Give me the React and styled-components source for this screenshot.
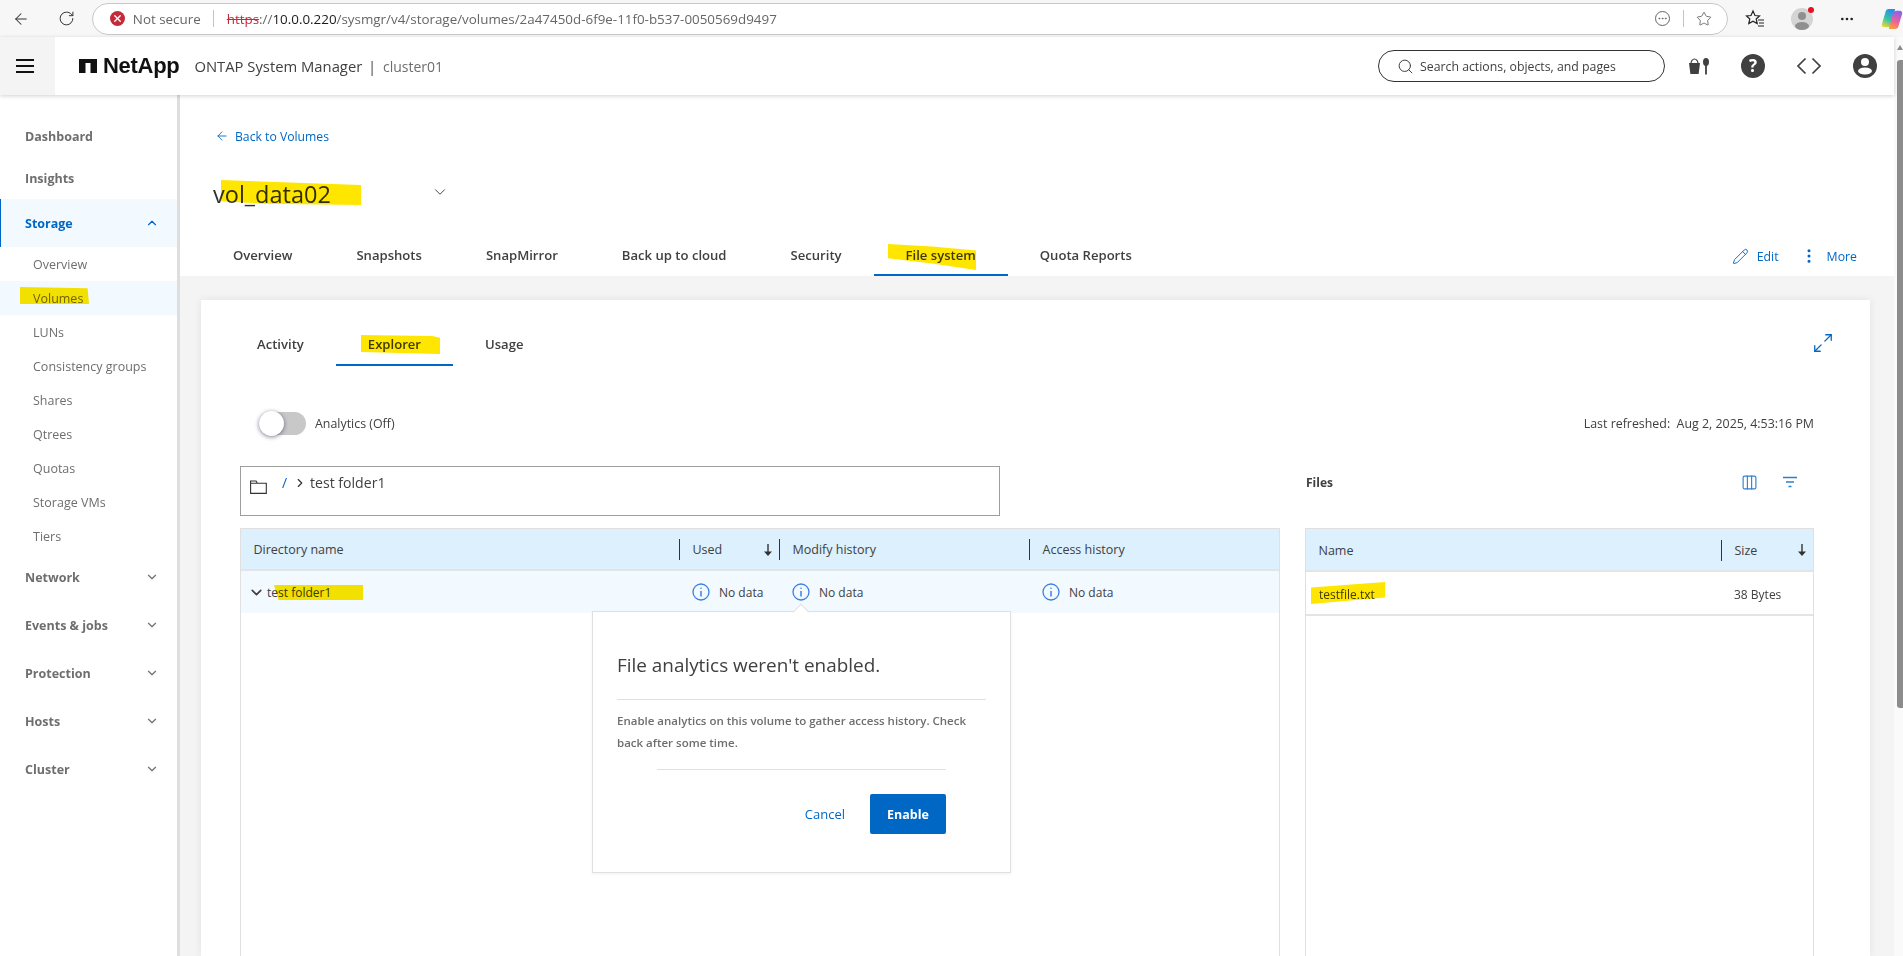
import React from "react";
import styled, { createGlobalStyle } from "styled-components";
import {
  ArrowLeft,
  ChevronDown,
  ChevronRight,
  ChevronUp,
  Columns3,
  EllipsisVertical,
  Maximize2,
  MoreHorizontal,
  Pencil,
  RotateCw,
  Search,
  Star,
  X,
} from "lucide-react";

const BLUE = "#0067c5";

const GlobalStyle = createGlobalStyle`
  html, body { margin: 0; padding: 0; height: 100%; overflow: hidden; background: #fff; }
  body { font-family: "Open Sans", "Liberation Sans", sans-serif; color: #404040; }
  * { box-sizing: border-box; }
`;

const Page = styled.div`
  width: 1903px;
  height: 956px;
  display: flex;
  flex-direction: column;
  overflow: hidden;
`;

/* browser chrome */
const BrowserBar = styled.div`
  height: 37px;
  flex: none;
  display: flex;
  align-items: center;
  background: #f7f7f7;
  position: relative;
`;

const NavButton = styled.span`
  width: ${(p) => p.$w || 45}px;
  display: flex;
  justify-content: center;
  color: #333;
`;

const AddressPill = styled.div`
  width: 1640px;
  height: 32px;
  margin-left: 2px;
  display: flex;
  align-items: center;
  background: #fff;
  border: 1px solid #c8c8c8;
  border-radius: 16px;
  padding: 0 15px 0 17px;
  font-size: 13.4px;
  color: #666;
`;

const ErrorDot = styled.span`
  width: 15px;
  height: 15px;
  border-radius: 50%;
  background: #c42b3a;
  color: #fff;
  display: flex;
  align-items: center;
  justify-content: center;
  margin-right: 8px;
`;

const Sep = styled.span`
  width: 1px;
  height: 17px;
  background: #c4c4c4;
  margin: ${(p) => p.$m};
`;

const Strike = styled.span`
  color: #c42b3a;
  text-decoration: line-through;
`;

const UrlHost = styled.span`
  color: #1a1a1a;
`;

const PillEnd = styled.div`
  margin-left: auto;
  display: flex;
  align-items: center;
  color: #555;
`;

const DotsCircle = styled.span`
  width: 15px;
  height: 15px;
  border: 1px solid #666;
  border-radius: 50%;
  display: flex;
  align-items: center;
  justify-content: center;
`;

const BarTools = styled.div`
  display: flex;
  align-items: center;
  flex: 1;
  padding-left: 17px;
  gap: 26px;
  color: #222;
`;

const Avatar = styled.span`
  width: 22px;
  height: 22px;
  border-radius: 50%;
  background: #d4d4d4;
  position: relative;
  display: block;
  flex: none;
  overflow: visible;
  &::after {
    content: "";
    position: absolute;
    top: -1px;
    right: -1px;
    width: 6px;
    height: 6px;
    border-radius: 50%;
    background: #e81123;
  }
`;

/* app */
const Shell = styled.div`
  flex: 1;
  display: flex;
  min-height: 0;
`;

const Scrollbar = styled.div`
  width: 9px;
  flex: none;
  background: #fafafa;
  padding: 8px 0 0 3px;
  &::before {
    content: "";
    display: block;
    width: 0;
    height: 0;
    border-left: 3px solid transparent;
    border-right: 3px solid transparent;
    border-bottom: 5px solid #8c8c8c;
  }
`;

const ScrollThumb = styled.div`
  height: 648px;
  margin-top: 10px;
  background: #8c8c8c;
  border-radius: 3px 0 0 3px;
`;

const AppArea = styled.div`
  flex: 1;
  display: flex;
  flex-direction: column;
  min-width: 0;
`;

const Header = styled.header`
  height: 58px;
  flex: none;
  display: flex;
  align-items: center;
  background: #fff;
  box-shadow: 0 1px 4px rgba(0, 0, 0, 0.18);
  position: relative;
  z-index: 2;
`;

const MenuCell = styled.div`
  width: 55px;
  height: 100%;
  background: #f4f4f4;
  display: flex;
  align-items: center;
  justify-content: center;
  padding-right: 6px;
`;

const Burger = styled.span`
  width: 18px;
  height: 14px;
  border-top: 2px solid #111;
  border-bottom: 2px solid #111;
  position: relative;
  &::before {
    content: "";
    position: absolute;
    left: 0;
    right: 0;
    top: 4px;
    height: 2px;
    background: #111;
  }
`;

const Logo = styled.div`
  margin-left: 24px;
  display: flex;
  align-items: center;
  gap: 6px;
  font-family: "Liberation Sans", sans-serif;
  font-weight: 700;
  font-size: 22px;
  letter-spacing: -0.3px;
  color: #111;
`;

const Product = styled.span`
  margin-left: 15px;
  font-size: 14.8px;
  font-weight: 400;
  color: #404040;
`;

const Cluster = styled.span`
  margin-left: 6px;
  font-size: 14px;
  color: #6e6e6e;
  &::before {
    content: "|";
    margin-right: 7px;
    color: #404040;
  }
`;

const SearchBox = styled.div`
  margin-left: auto;
  width: 287px;
  height: 32px;
  border: 1px solid #333;
  border-radius: 16px;
  display: flex;
  align-items: center;
  gap: 6px;
  padding-left: 18px;
  font-size: 12.3px;
  color: #404040;
`;

const HeadIcons = styled.div`
  display: flex;
  align-items: center;
  width: 229px;
  padding-left: 24px;
  gap: 31px;
  color: #333;
`;

const HelpIcon = styled.span`
  width: 24px;
  height: 24px;
  border-radius: 50%;
  background: #404040;
  color: #fff;
  font-weight: 700;
  font-size: 17px;
  line-height: 24px;
  text-align: center;
`;

const Body = styled.div`
  flex: 1;
  display: flex;
  min-height: 0;
`;

const Sidebar = styled.nav`
  width: 180px;
  flex: none;
  background: #fff;
  border-right: 3px solid #dedede;
  padding-top: 20px;
`;

const NavTop = styled.div`
  height: ${(p) => p.$h || 48}px;
  display: flex;
  align-items: center;
  justify-content: space-between;
  padding: 0 18px 0 ${(p) => (p.$active ? 24 : 25)}px;
  font-size: 12.5px;
  font-weight: 700;
  color: ${(p) => (p.$active ? BLUE : "#6e6e6e")};
  background: ${(p) => (p.$active ? "#f2f9ff" : "transparent")};
  border-left: ${(p) => (p.$active ? `1px solid ${BLUE}` : "none")};
`;

const NavSub = styled.div`
  height: 34px;
  display: flex;
  align-items: center;
  padding-left: 33px;
  font-size: 12.5px;
  color: #6e6e6e;
  background: ${(p) => (p.$active ? "#f2f9ff" : "transparent")};
`;

const Main = styled.main`
  flex: 1;
  min-width: 0;
  display: flex;
  flex-direction: column;
  background: #f4f4f4;
`;

const TopPane = styled.div`
  height: 181px;
  flex: none;
  background: #fff;
  display: flex;
  flex-direction: column;
  padding: 32px 0 0 21px;
`;

const BackLink = styled.a`
  display: flex;
  align-items: center;
  gap: 6px;
  height: 18px;
  padding-left: 14px;
  font-size: 12.2px;
  color: ${BLUE};
`;

const TitleRow = styled.div`
  display: flex;
  align-items: center;
  height: 32px;
  margin-top: 31px;
  padding-left: 12px;
`;

const Title = styled.h1`
  position: relative;
  margin: 3px 0 0;
  width: 218px;
  font-size: 23.5px;
  font-weight: 400;
  color: #333;
`;

const MainTabs = styled.div`
  margin-top: auto;
  display: flex;
  align-items: stretch;
  height: 43px;
`;

const Tab = styled.div`
  position: relative;
  display: flex;
  align-items: center;
  padding: 0 32px;
  font-size: 13.1px;
  font-weight: 600;
  color: #404040;
  border-bottom: 2px solid ${(p) => (p.$active ? BLUE : "transparent")};
`;

const MainTab = styled(Tab)`
  padding-top: 2px;
`;

const Marked = styled.span`
  position: relative;
  display: inline-block;
`;

const Mark = styled.svg`
  position: absolute;
  left: ${(p) => p.$l}px;
  top: ${(p) => p.$t}px;
  width: ${(p) => p.$w}px;
  height: ${(p) => p.$h}px;
  mix-blend-mode: multiply;
  pointer-events: none;
`;

const TopActions = styled.div`
  margin-left: auto;
  display: flex;
  align-items: center;
  padding: 3px 37px 0 0;
  font-size: 12.3px;
  color: ${BLUE};
`;

const Action = styled.span`
  display: flex;
  align-items: center;
  gap: ${(p) => p.$gap}px;
  margin-left: ${(p) => p.$ml || 0}px;
`;

const Card = styled.section`
  flex: 1;
  margin: 24px 24px 0 21px;
  background: #fff;
  box-shadow: 0 0 8px rgba(0, 0, 0, 0.08);
  padding: 24px 56px 0 39px;
  display: flex;
  flex-direction: column;
  min-height: 0;
`;

const SubTabs = styled.div`
  height: 42px;
  flex: none;
  display: flex;
  align-items: stretch;
  margin: 0 -20px 0 -15px;
`;

const ExpandBtn = styled.span`
  margin-left: auto;
  color: ${BLUE};
  display: flex;
  align-items: flex-start;
  padding-top: 8px;
`;

const StatusRow = styled.div`
  height: 24px;
  margin-top: 45px;
  flex: none;
  display: flex;
  align-items: center;
  font-size: 12.4px;
  color: #404040;
`;

const Toggle = styled.span`
  width: 47px;
  height: 23px;
  margin-left: 19px;
  border-radius: 12px;
  background: #c8c8c8;
  position: relative;
  flex: none;
  &::before {
    content: "";
    position: absolute;
    left: 0;
    top: -1px;
    width: 25px;
    height: 25px;
    border-radius: 50%;
    background: #fff;
    box-shadow: 0 1px 4px rgba(40, 40, 70, 0.6);
  }
`;

const ToggleLabel = styled.span`
  margin-left: 9px;
`;

const Refreshed = styled.span`
  margin-left: auto;
`;

const Columns = styled.div`
  flex: 1;
  min-height: 0;
  margin-top: 31px;
  display: grid;
  grid-template-columns: 1040px 1fr;
  grid-template-rows: 50px 1fr;
  gap: 12px 25px;
`;

const PathBox = styled.div`
  width: 760px;
  height: 50px;
  border: 1px solid #9e9e9e;
  display: flex;
  align-items: flex-start;
  padding: 6px 0 0 9px;
  font-size: 14.1px;
  color: #404040;
`;

const FolderWrap = styled.span`
  display: flex;
  margin-top: 7px;
  margin-right: 15px;
  color: #333;
`;

const Slash = styled.span`
  color: ${BLUE};
  width: 9px;
`;

const Crumb = styled.span`
  display: flex;
  margin: 3px 3px 0 2px;
  color: #333;
`;

const FilesHead = styled.div`
  height: 32px;
  display: flex;
  align-items: center;
  font-size: 12px;
  font-weight: 700;
  color: #404040;
  padding-left: 1px;
`;

const FileTools = styled.div`
  margin-left: auto;
  display: flex;
  align-items: center;
  gap: 24px;
  padding-right: 16px;
  color: #2f7fd1;
`;

const Table = styled.div`
  position: relative;
  border-left: 1px solid #e0e0e0;
  border-right: 1px solid #e0e0e0;
  min-height: 0;
`;

const Row = styled.div`
  display: grid;
  grid-template-columns: ${(p) => p.$cols};
  height: ${(p) => p.$h}px;
  align-items: center;
  padding-top: ${(p) => p.$pt || 0}px;
  font-size: 12.5px;
  color: #404040;
  background: ${(p) => p.$bg || "transparent"};
  border-bottom: ${(p) => (p.$line ? "2px solid #e4e4e4" : "none")};
  border-top: ${(p) => (p.$top ? "1px solid #e0e0e0" : "none")};
`;

const HeadCell = styled.div`
  display: flex;
  align-items: center;
  height: 21px;
  padding: 0 6px 0 12.5px;
  font-weight: 500;
  border-left: ${(p) => (p.$div ? "1px solid #333" : "none")};
`;

const SortArrow = styled.svg`
  margin-left: auto;
  flex: none;
`;

const DataCell = styled.div`
  display: flex;
  align-items: center;
  gap: 9px;
  padding-left: 13px;
  font-size: 12px;
`;

const TreeCell = styled.div`
  display: flex;
  align-items: center;
  gap: 2px;
  padding-left: 7px;
  font-size: 12px;
`;

const Popover = styled.div`
  position: absolute;
  left: 351px;
  top: 83px;
  width: 419px;
  height: 262px;
  background: #fff;
  border: 1px solid #e0e0e0;
  box-shadow: 0 1px 3px rgba(0, 0, 0, 0.06);
  padding: 0 24px;
  &::before {
    content: "";
    position: absolute;
    left: 202px;
    top: -6px;
    width: 11px;
    height: 11px;
    background: #fff;
    border-left: 1px solid #e0e0e0;
    border-top: 1px solid #e0e0e0;
    transform: rotate(45deg);
  }
`;

const PopTitle = styled.div`
  height: 88px;
  padding-top: 39px;
  font-size: 18.9px;
  line-height: 28px;
  color: #404040;
  border-bottom: 1px solid #e0e0e0;
`;

const PopText = styled.p`
  margin: 0;
  padding-top: 10px;
  font-size: 11.5px;
  font-weight: 600;
  line-height: 22px;
  color: #6e6e6e;
`;

const PopFoot = styled.div`
  margin: 15px 40px 0;
  padding: 24px 0 0;
  border-top: 1px solid #e0e0e0;
  display: flex;
  align-items: center;
  justify-content: flex-end;
  gap: 25px;
`;

const CancelLink = styled.a`
  font-size: 13px;
  color: ${BLUE};
`;

const EnableButton = styled.button`
  width: 76px;
  height: 40px;
  border: none;
  border-radius: 2px;
  background: ${BLUE};
  color: #fff;
  font-family: inherit;
  font-size: 12.5px;
  font-weight: 700;
`;

const InfoIcon = () => (
  <svg width="18" height="18" viewBox="0 0 18 18" fill="none" stroke="#3d7fe0" strokeWidth="1.3">
    <circle cx="9" cy="9" r="8" />
    <path d="M9 8v5.5" strokeWidth="1.5" />
    <circle cx="9" cy="5.2" r="0.8" fill="#3d7fe0" stroke="none" />
  </svg>
);

const DownArrow = () => (
  <SortArrow width="10" height="12" viewBox="0 0 10 12" fill="#333">
    <path d="M4.3 0h1.4v7.5H9L5 12 1 7.5h3.3z" />
  </SortArrow>
);

const Highlight = ({ l, t, w, h, points, color = "#ffe600" }) => (
  <Mark $l={l} $t={t} $w={w} $h={h} viewBox="0 0 100 100" preserveAspectRatio="none">
    <polygon points={points} fill={color} />
  </Mark>
);

const NetAppMark = () => (
  <svg width="18" height="14" viewBox="0 0 18 14" fill="#111">
    <path d="M0 0h18v14h-6.500V4h-5v10H0z" />
  </svg>
);

const BucketIcon = () => (
  <svg width="21" height="18" viewBox="0 0 21 18" fill="#404040">
    <path d="M0 6h11l-1.400 11H1.400z" />
    <path d="M2 6.500a3.500 4.500 0 0 1 7 0" fill="none" stroke="#404040" strokeWidth="1.2" />
    <ellipse cx="17" cy="5" rx="3" ry="4" />
    <rect x="16.100" y="8" width="1.800" height="9.500" />
  </svg>
);

const UserIcon = () => (
  <svg width="24" height="24" viewBox="0 0 24 24">
    <circle cx="12" cy="12" r="12" fill="#404040" />
    <circle cx="12" cy="8" r="4" fill="#fff" />
    <ellipse cx="12" cy="17" rx="7" ry="3.500" fill="#fff" />
  </svg>
);

const CodeIcon = () => (
  <svg width="26" height="18" viewBox="0 0 26 18" fill="none" stroke="#404040" strokeWidth="1.7">
    <path d="M9.500 1.500L2 9l7.500 7.500M16.500 1.500L24 9l-7.500 7.500" />
  </svg>
);

const FolderIcon = () => (
  <svg width="17" height="14" viewBox="0 0 17 14" fill="none" stroke="#333" strokeWidth="1.1">
    <path d="M.6 13.4V1h5.5l1.2 2.2h9v10.2zM.6 3.2h6.7" />
  </svg>
);

const FavIcon = () => (
  <svg width="20" height="20" viewBox="0 0 20 20" fill="none" stroke="#222" strokeWidth="1.2">
    <path d="M8 2l2 4.500 4.500.5-3.300 3 1 4.600L8 12.200 3.800 14.600l1-4.600L1.500 7 6 6.500z" />
    <path d="M13 11h6M14 14h5M13 17h6" />
  </svg>
);

const AvatarFace = () => (
  <svg width="22" height="22" viewBox="0 0 22 22" fill="#8f8f8f">
    <circle cx="11" cy="8" r="4" />
    <ellipse cx="11" cy="18" rx="7" ry="4" />
  </svg>
);

const CopilotIcon = () => (
  <svg width="22" height="22" viewBox="0 0 24 24">
    <defs>
      <linearGradient id="cpA" x1="0.6" y1="0" x2="0.2" y2="1">
        <stop offset="0" stopColor="#2a8cf0" />
        <stop offset="0.55" stopColor="#37c6a0" />
        <stop offset="1" stopColor="#f4d63a" />
      </linearGradient>
      <linearGradient id="cpB" x1="0.6" y1="0" x2="0.3" y2="1">
        <stop offset="0" stopColor="#8a63e8" />
        <stop offset="0.55" stopColor="#ec5f9f" />
        <stop offset="1" stopColor="#f7a13c" />
      </linearGradient>
    </defs>
    <path d="M8.500 1h7l-4.500 17c-.5 2-2 3-4 3H3.500C1.500 21 .5 19.500 1 17.500L5 4c.5-2 1.500-3 3.500-3z" fill="url(#cpA)" />
    <path d="M15.500 23h-7l4.500-17c.5-2 2-3 4-3h3.500c2 0 3 1.500 2.500 3.500L19 20c-.5 2-1.500 3-3.500 3z" fill="url(#cpB)" />
  </svg>
);

const subItems = ["LUNs", "Consistency groups", "Shares", "Qtrees", "Quotas", "Storage VMs", "Tiers"];
const lowerNav = ["Network", "Events & jobs", "Protection", "Hosts", "Cluster"];
const tabs = ["Overview", "Snapshots", "SnapMirror", "Back up to cloud", "Security"];
const leftCols = "438px 100px 250px 1fr";
const rightCols = "1fr 92px";

function App() {
  return (
    <Page>
      <GlobalStyle />
      <BrowserBar>
        <NavButton $w={43}>
          <ArrowLeft size={18} strokeWidth={1.4} />
        </NavButton>
        <NavButton $w={47}>
          <RotateCw size={17} strokeWidth={1.4} />
        </NavButton>
        <AddressPill>
          <ErrorDot>
            <X size={11} strokeWidth={3} />
          </ErrorDot>
          Not secure
          <Sep $m="0 13px 0 12px" />
          <span>
            <Strike>https</Strike>://<UrlHost>10.0.0.220</UrlHost>/sysmgr/v4/storage/volumes/2a47450d-6f9e-11f0-b537-0050569d9497
          </span>
          <PillEnd>
            <DotsCircle>
              <MoreHorizontal size={11} strokeWidth={1.6} />
            </DotsCircle>
            <Sep $m="0 12px 0 13px" />
            <Star size={16} strokeWidth={1.2} />
          </PillEnd>
        </AddressPill>
        <BarTools>
          <FavIcon />
          <Avatar>
            <AvatarFace />
          </Avatar>
          <MoreHorizontal size={16} />
          <CopilotIcon />
        </BarTools>
      </BrowserBar>
      <Shell>
        <AppArea>
          <Header>
            <MenuCell>
              <Burger />
            </MenuCell>
            <Logo>
              <NetAppMark />
              NetApp
            </Logo>
            <Product>ONTAP System Manager</Product>
            <Cluster>cluster01</Cluster>
            <SearchBox>
              <Search size={17} strokeWidth={1.4} />
              Search actions, objects, and pages
            </SearchBox>
            <HeadIcons>
              <BucketIcon />
              <HelpIcon>?</HelpIcon>
              <CodeIcon />
              <UserIcon />
            </HeadIcons>
          </Header>
          <Body>
            <Sidebar>
              <NavTop $h={42}>Dashboard</NavTop>
              <NavTop $h={42}>Insights</NavTop>
              <NavTop $active>
                Storage
                <ChevronUp size={14} />
              </NavTop>
              <NavSub>Overview</NavSub>
              <NavSub $active>
                <Marked>
                  <Highlight l={-13} t={-3} w={69} h={17} points="0,0 98,8 100,100 0,100" />
                  Volumes
                </Marked>
              </NavSub>
              {subItems.map((s) => (
                <NavSub key={s}>{s}</NavSub>
              ))}
              {lowerNav.map((s) => (
                <NavTop key={s}>
                  {s}
                  <ChevronDown size={14} />
                </NavTop>
              ))}
            </Sidebar>
            <Main>
              <TopPane>
                <BackLink>
                  <ArrowLeft size={14} strokeWidth={1.5} />
                  Back to Volumes
                </BackLink>
                <TitleRow>
                  <Title>
                    <Highlight l={8} t={2} w={140} h={25} points="0,0 100,20 100,100 30,95 0,85" />
                    vol_data02
                  </Title>
                  <ChevronDown size={18} strokeWidth={1.3} />
                </TitleRow>
                <MainTabs>
                  {tabs.map((t) => (
                    <MainTab key={t}>{t}</MainTab>
                  ))}
                  <MainTab $active>
                    <Marked>
                      <Highlight l={-18} t={-2} w={88} h={26} points="0,0 50,10 100,25 100,100 50,75 0,55" />
                      File system
                    </Marked>
                  </MainTab>
                  <MainTab>Quota Reports</MainTab>
                  <TopActions>
                    <Action $gap={8}>
                      <Pencil size={17} strokeWidth={1.3} />
                      Edit
                    </Action>
                    <Action $gap={9} $ml={21}>
                      <EllipsisVertical size={18} strokeWidth={2} />
                      More
                    </Action>
                  </TopActions>
                </MainTabs>
              </TopPane>
              <Card>
                <SubTabs>
                  <Tab>Activity</Tab>
                  <Tab $active>
                    <Marked>
                      <Highlight l={-7} t={0} w={79} h={19} points="0,0 90,5 100,15 100,100 0,90" />
                      Explorer
                    </Marked>
                  </Tab>
                  <Tab>Usage</Tab>
                  <ExpandBtn>
                    <Maximize2 size={22} strokeWidth={1.4} />
                  </ExpandBtn>
                </SubTabs>
                <StatusRow>
                  <Toggle />
                  <ToggleLabel>Analytics (Off)</ToggleLabel>
                  <Refreshed>Last refreshed:&nbsp; Aug 2, 2025, 4:53:16 PM</Refreshed>
                </StatusRow>
                <Columns>
                  <PathBox>
                    <FolderWrap>
                      <FolderIcon />
                    </FolderWrap>
                    <Slash>/</Slash>
                    <Crumb>
                      <ChevronRight size={14} />
                    </Crumb>
                    test folder1
                  </PathBox>
                  <FilesHead>
                    Files
                    <FileTools>
                      <Columns3 size={17} strokeWidth={1.6} />
                      <svg width="16" height="12" viewBox="0 0 16 12" fill="none" stroke="#2f7fd1" strokeWidth="1.4">
                        <path d="M1 1.500h14M4 6h8M6.500 10.500h3" />
                      </svg>
                    </FileTools>
                  </FilesHead>
                  <Table>
                    <Row $cols={leftCols} $h={43} $pt={1} $bg="#dcf0fe" $line $top>
                      <HeadCell>Directory name</HeadCell>
                      <HeadCell $div>
                        Used
                        <DownArrow />
                      </HeadCell>
                      <HeadCell $div>Modify history</HeadCell>
                      <HeadCell $div>Access history</HeadCell>
                    </Row>
                    <Row $cols={leftCols} $h={42} $bg="#f2faff">
                      <TreeCell>
                        <ChevronDown size={17} strokeWidth={2.4} />
                        <Marked>
                          <Highlight l={7} t={1} w={89} h={15} points="0,0 100,0 100,100 5,100" />
                          test folder1
                        </Marked>
                      </TreeCell>
                      <DataCell>
                        <InfoIcon />
                        No data
                      </DataCell>
                      <DataCell>
                        <InfoIcon />
                        No data
                      </DataCell>
                      <DataCell>
                        <InfoIcon />
                        No data
                      </DataCell>
                    </Row>
                    <Popover>
                      <PopTitle>File analytics weren't enabled.</PopTitle>
                      <PopText>Enable analytics on this volume to gather access history. Check back after some time.</PopText>
                      <PopFoot>
                        <CancelLink>Cancel</CancelLink>
                        <EnableButton>Enable</EnableButton>
                      </PopFoot>
                    </Popover>
                  </Table>
                  <Table>
                    <Row $cols={rightCols} $h={44} $pt={1} $bg="#dcf0fe" $line $top>
                      <HeadCell>Name</HeadCell>
                      <HeadCell $div>
                        Size
                        <DownArrow />
                      </HeadCell>
                    </Row>
                    <Row $cols={rightCols} $h={44} $pt={3} $line>
                      <DataCell>
                        <Marked>
                          <Highlight l={-8} t={-4} w={74} h={22} points="0,25 100,0 100,70 0,100" />
                          testfile.txt
                        </Marked>
                      </DataCell>
                      <DataCell>38 Bytes</DataCell>
                    </Row>
                  </Table>
                </Columns>
              </Card>
            </Main>
          </Body>
        </AppArea>
        <Scrollbar>
          <ScrollThumb />
        </Scrollbar>
      </Shell>
    </Page>
  );
}

export default App;
